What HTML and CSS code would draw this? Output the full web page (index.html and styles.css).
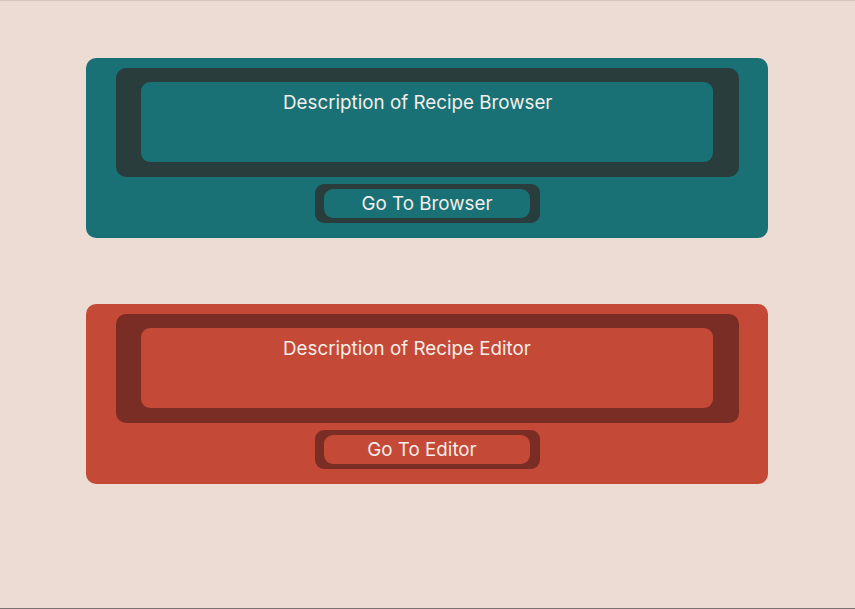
FILE: index.html
```html
<!DOCTYPE html>
<html lang="en">
<head>
<meta charset="utf-8">
<title>Recipes</title>
<link rel="stylesheet" href="styles.css">
</head>
<body>
<main class="page">
  <section class="card card--teal">
    <div class="frame">
      <div class="panel">
        <p class="desc">Description of Recipe Browser</p>
      </div>
    </div>
    <div class="btn-frame">
      <button class="btn">Go To Browser</button>
    </div>
  </section>
  <section class="card card--red">
    <div class="frame">
      <div class="panel">
        <p class="desc">Description of Recipe Editor</p>
      </div>
    </div>
    <div class="btn-frame">
      <button class="btn btn--editor">Go To Editor</button>
    </div>
  </section>
</main>
</body>
</html>
```
FILE: styles.css
```css
html, body {
  margin: 0;
  padding: 0;
}
body {
  box-sizing: border-box;
  height: 609px;
  background: #ecdcd4;
  border-top: 1px solid #d6c4bc;
  border-bottom: 1px solid #7a7270;
  font-family: Inter, "Noto Sans", sans-serif;
  overflow: hidden;
}
.page {
  display: flex;
  flex-direction: column;
  gap: 66px;
  padding: 57px 0 0 86px;
}
.card {
  width: 682px;
  height: 180px;
  box-sizing: border-box;
  border-radius: 10px;
  padding: 10px 29px 16px 30px;
  display: flex;
  flex-direction: column;
  align-items: center;
}
.card--teal { background: #1a7175; --dark: #293d3d; }
.card--red { background: #c54937; --dark: #7a2d24; }
.frame {
  align-self: stretch;
  background: var(--dark);
  border-radius: 10px;
  padding: 14px 26px 15px 25px;
}
.panel {
  height: 80px;
  box-sizing: border-box;
  border-radius: 9px;
  padding: 9px 0 0 142px;
}
.card--teal .panel { background: #1a7175; }
.card--red .panel { background: #c54937; }
.desc {
  margin: 0;
  color: #f2eeea;
  font-size: 18.8px;
  line-height: 23px;
}
.btn-frame {
  margin-top: 7px;
  background: var(--dark);
  border-radius: 9px;
  padding: 5px 10px 5px 9px;
}
.btn {
  display: block;
  width: 206px;
  height: 29px;
  border: 0;
  border-radius: 9px;
  color: #f2eeea;
  font-family: Inter, "Noto Sans", sans-serif;
  font-size: 18.8px;
  line-height: 23px;
  padding: 3px 0;
  text-align: center;
  cursor: pointer;
}
.card--teal .btn { background: #1a7175; }
.card--red .btn { background: #c54937; }
.btn--editor { padding-right: 10px; }
```
